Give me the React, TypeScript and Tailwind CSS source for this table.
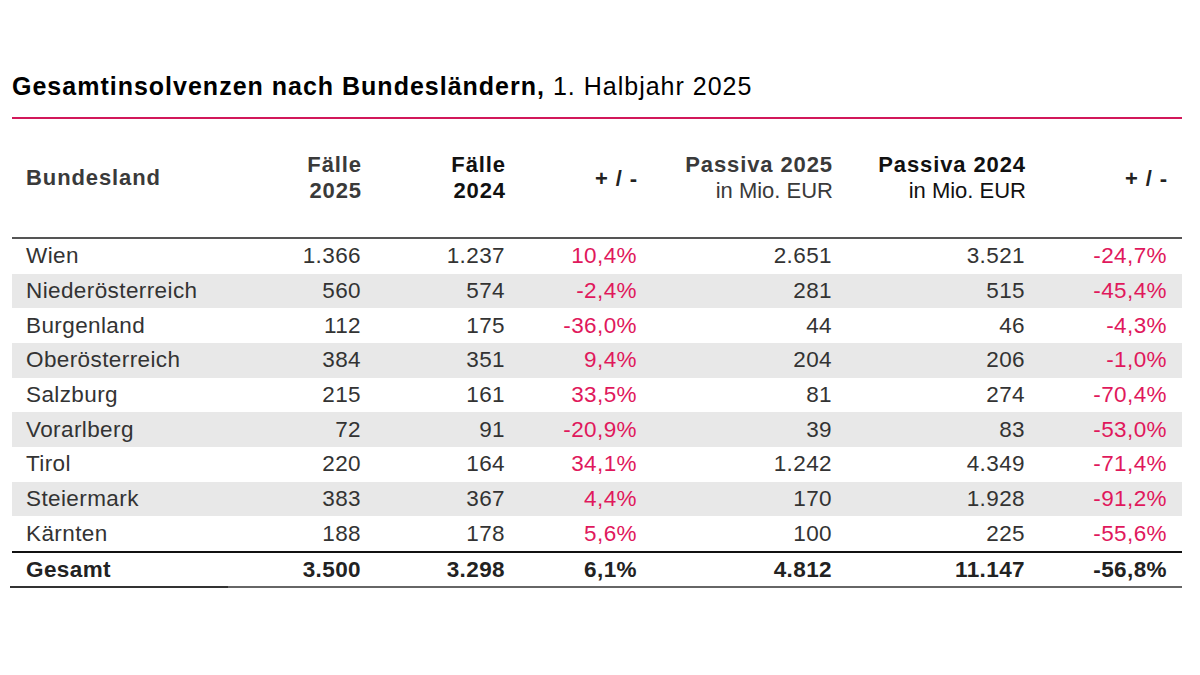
const ROWS: [string, string, string, string, string, string, string][] = [
  ["Wien", "1.366", "1.237", "10,4%", "2.651", "3.521", "-24,7%"],
  ["Niederösterreich", "560", "574", "-2,4%", "281", "515", "-45,4%"],
  ["Burgenland", "112", "175", "-36,0%", "44", "46", "-4,3%"],
  ["Oberösterreich", "384", "351", "9,4%", "204", "206", "-1,0%"],
  ["Salzburg", "215", "161", "33,5%", "81", "274", "-70,4%"],
  ["Vorarlberg", "72", "91", "-20,9%", "39", "83", "-53,0%"],
  ["Tirol", "220", "164", "34,1%", "1.242", "4.349", "-71,4%"],
  ["Steiermark", "383", "367", "4,4%", "170", "1.928", "-91,2%"],
  ["Kärnten", "188", "178", "5,6%", "100", "225", "-55,6%"],
];

const GRID =
  "grid grid-cols-[249px_100px_144px_132px_195px_193px_142px] pr-[15px] items-center";

export default function App() {
  return (
    <div className="w-[1200px] h-[675px] bg-white pl-[12px] pr-[18px] pt-[70px] font-['Liberation_Sans',Arial,sans-serif] text-[#333]">
      {/* Title */}
      <h1 className="text-[25px] leading-[32px] tracking-[1px] text-black mb-[15px]">
        <span className="font-bold">Gesamtinsolvenzen nach Bundesländern,</span> 1. Halbjahr 2025
      </h1>
      <div className="h-[2px] bg-[#d2185a]" />

      {/* Header */}
      <div className={`${GRID} h-[118px] text-[22px] leading-[26px] font-bold tracking-[0.9px]`}>
        <div className="pl-[14px] text-[#3a3a3a]">Bundesland</div>
        <div className="text-right text-[#3a3a3a] -mr-[1px]">
          Fälle
          <br />
          2025
        </div>
        <div className="text-right text-[#111] -mr-[1px]">
          Fälle
          <br />
          2024
        </div>
        <div className="text-right text-[#222] pt-[2px] -mr-[1px]">+ / -</div>
        <div className="text-right text-[#3a3a3a] -mr-[1px]">
          Passiva 2025
          <br />
          <span className="font-normal tracking-normal">in Mio. EUR</span>
        </div>
        <div className="text-right text-[#111] -mr-[1px]">
          Passiva 2024
          <br />
          <span className="font-normal tracking-normal">in Mio. EUR</span>
        </div>
        <div className="text-right text-[#222] pt-[2px] -mr-[1px]">+ / -</div>
      </div>
      <div className="h-[2px] bg-[#555]" />

      {/* Rows */}
      {ROWS.map((r, i) => (
        <div
          key={r[0]}
          className={`${GRID} h-[34.67px] text-[22.5px] tracking-[0.4px] ${i % 2 === 1 ? "bg-[#e8e8e8]" : "bg-white"}`}
        >
          <div className="pl-[14px]">{r[0]}</div>
          <div className="text-right">{r[1]}</div>
          <div className="text-right">{r[2]}</div>
          <div className="text-right text-[#e0185c]">{r[3]}</div>
          <div className="text-right">{r[4]}</div>
          <div className="text-right">{r[5]}</div>
          <div className="text-right text-[#e0185c]">{r[6]}</div>
        </div>
      ))}
      <div className="h-[2px] bg-[#111]" />

      {/* Total */}
      <div className={`${GRID} h-[33px] text-[22.5px] tracking-[0.4px] font-bold text-[#222]`}>
        <div className="pl-[14px]">Gesamt</div>
        <div className="text-right">3.500</div>
        <div className="text-right">3.298</div>
        <div className="text-right">6,1%</div>
        <div className="text-right">4.812</div>
        <div className="text-right">11.147</div>
        <div className="text-right">-56,8%</div>
      </div>
      <div className="flex h-[2px] -ml-[2px]">
        <div className="w-[218px] bg-[#333]" />
        <div className="flex-1 bg-[#666]" />
      </div>
    </div>
  );
}
